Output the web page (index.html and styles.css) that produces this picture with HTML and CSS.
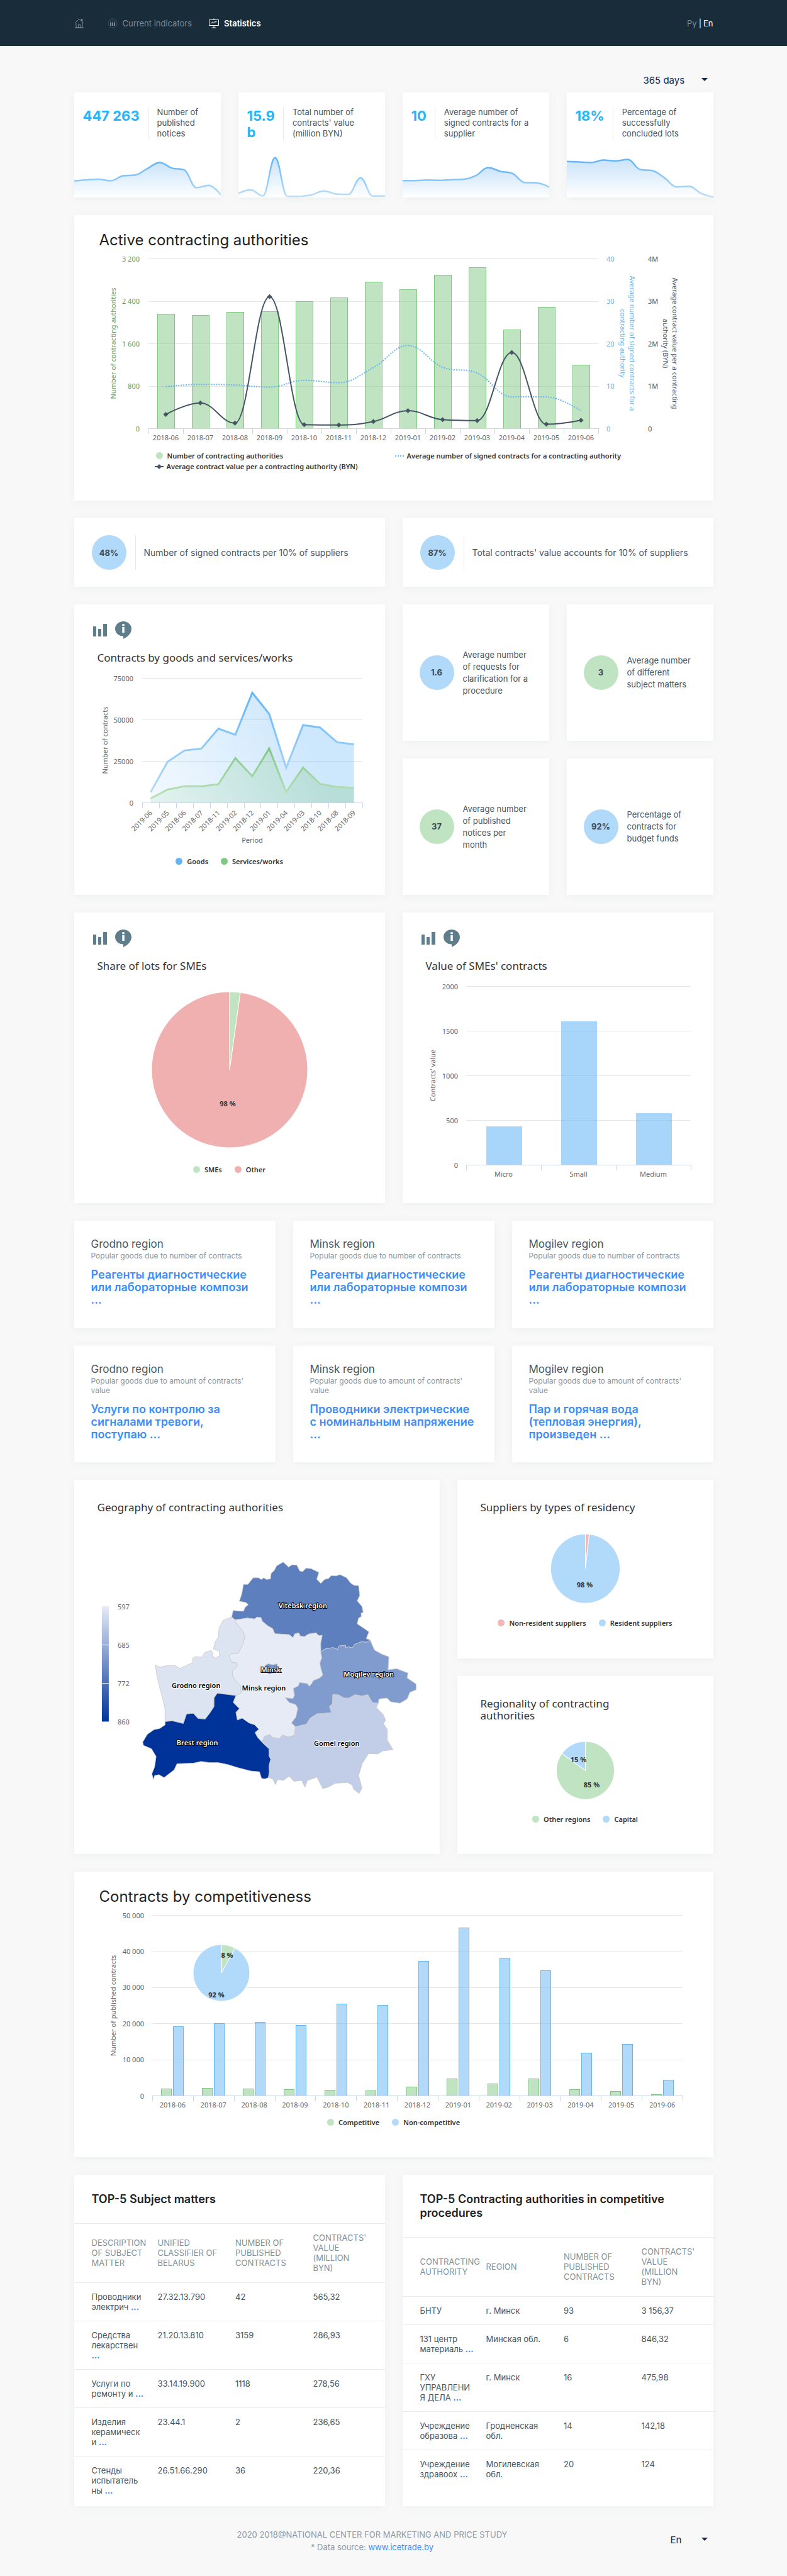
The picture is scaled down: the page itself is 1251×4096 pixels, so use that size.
FILE: index.html
```html
<!DOCTYPE html>
<html lang="en">
<head>
<meta charset="utf-8">
<meta name="viewport" content="width=device-width, initial-scale=1">
<title>Statistics</title>
<link rel="stylesheet" href="styles.css">
</head>
<body>
<svg class="sprite" aria-hidden="true">
  <symbol id="i-bars" viewBox="0 0 22 20"><path d="M0 4h5v16H0zM8 8h5v12H8zM16 0h6v20h-6z"/></symbol>
  <symbol id="i-info" viewBox="0 0 26 28"><path fill-rule="evenodd" d="M13 0c7.200 0 13 5.200 13 11.800 0 6.700-5.500 12.900-13 16.200v-4.400C5.800 23.600 0 18.400 0 11.800S5.800 0 13 0zM11.300 4.300h3.500v2.900h-3.500zM11.300 9h3.500v9h-3.500z"/></symbol>
</svg>

<header class="topbar">
  <div class="wrap topbar-in">
    <nav class="nav">
      <a href="#" aria-label="Home"><svg class="ico" viewBox="0 0 16 16"><path d="M1 8 8 1l7 7M3 7v8h10V7M6.500 15v-5h3v5M11.500 4V1.500h1.500v4M1 15h14"/></svg></a>
      <a href="#"><svg class="ico" viewBox="0 0 16 16"><circle cx="8" cy="8" r="7" opacity=".4"/><path d="M5 6.500V12M8 6.500V12M11 6.500V12" stroke-width="2"/><path d="M5 4v1.500M8 3.500V5M11 4v1.500" opacity=".7"/></svg>Current indicators</a>
      <a href="#" class="on"><svg class="ico" viewBox="0 0 16 16"><path d="M.500 2.500h15v9H.500zM8 .500v2M8 11.500v3.500M4.500 15.200h7M3.500 8.500l2.500-3 2 2.500 2-3 1 1.500 1.500-2"/></svg>Statistics</a>
    </nav>
    <div class="lang"><a href="#">Ру</a><span>|</span><a href="#" class="on">En</a></div>
  </div>
</header>

<main class="wrap">
  <div class="period">
    <label class="pick pick-days"><select aria-label="Period"><option>365 days</option></select></label>
  </div>

  <div class="stack">
    <section class="row four">
      <article class="card kpi"><div class="kpi-top"><strong>447 263</strong><p>Number of published notices</p></div><svg class="spark" id="spark-1" viewBox="0 0 233 67"></svg></article>
      <article class="card kpi"><div class="kpi-top"><strong>15.9<br>b</strong><p>Total number of contracts' value (million BYN)</p></div><svg class="spark" id="spark-2" viewBox="0 0 233 67"></svg></article>
      <article class="card kpi"><div class="kpi-top"><strong>10</strong><p>Average number of signed contracts for a supplier</p></div><svg class="spark" id="spark-3" viewBox="0 0 233 67"></svg></article>
      <article class="card kpi"><div class="kpi-top"><strong>18%</strong><p>Percentage of successfully concluded lots</p></div><svg class="spark" id="spark-4" viewBox="0 0 233 67"></svg></article>
    </section>

    <section class="card wide">
      <h2 class="big-title">Active contracting authorities</h2>
      <svg class="chart" id="authorities" viewBox="0 54 1016 314"></svg>
      <ul class="legend legend-grid">
        <li><i class="dot lgreen"></i>Number of contracting authorities</li>
        <li><svg class="key" viewBox="0 0 14 10"><path class="dotted" d="M0 5h14"/></svg>Average number of signed contracts for a contracting authority</li>
        <li><svg class="key" viewBox="0 0 14 10"><path class="dark-line" d="M0 5h14"/><path class="mark" d="M7 1l4 4-4 4-4-4z"/></svg>Average contract value per a contracting authority (BYN)</li>
      </ul>
    </section>

    <section class="row two">
      <article class="card share"><b class="disc blue">48%</b><p>Number of signed contracts per 10% of suppliers</p></article>
      <article class="card share"><b class="disc blue">87%</b><p>Total contracts' value accounts for 10% of suppliers</p></article>
    </section>

    <section class="row two">
      <article class="card half">
        <div class="tools"><button type="button" aria-label="Chart view"><svg class="t-bars"><use href="#i-bars"/></svg></button><button type="button" aria-label="Information"><svg class="t-info"><use href="#i-info"/></svg></button></div>
        <h3 class="title">Contracts by goods and services/works</h3>
        <svg class="chart" id="goods" viewBox="0 97 494 295"></svg>
        <ul class="legend"><li><i class="dot blue2"></i>Goods</li><li><i class="dot green2"></i>Services/works</li></ul>
      </article>
      <div class="facts">
        <article class="card fact"><b class="disc blue">1.6</b><p>Average number of requests for clarification for a procedure</p></article>
        <article class="card fact"><b class="disc green">3</b><p>Average number of different subject matters</p></article>
        <article class="card fact"><b class="disc green">37</b><p>Average number of published notices per month</p></article>
        <article class="card fact"><b class="disc blue">92%</b><p>Percentage of contracts for budget funds</p></article>
      </div>
    </section>

    <section class="row two">
      <article class="card half">
        <div class="tools"><button type="button" aria-label="Chart view"><svg class="t-bars"><use href="#i-bars"/></svg></button><button type="button" aria-label="Information"><svg class="t-info"><use href="#i-info"/></svg></button></div>
        <h3 class="title">Share of lots for SMEs</h3>
        <svg class="chart" id="sme-share" viewBox="0 97 494 295"></svg>
        <ul class="legend"><li><i class="dot lgreen"></i>SMEs</li><li><i class="dot red"></i>Other</li></ul>
      </article>
      <article class="card half">
        <div class="tools"><button type="button" aria-label="Chart view"><svg class="t-bars"><use href="#i-bars"/></svg></button><button type="button" aria-label="Information"><svg class="t-info"><use href="#i-info"/></svg></button></div>
        <h3 class="title">Value of SMEs' contracts</h3>
        <svg class="chart" id="sme-value" viewBox="0 97 494 335"></svg>
      </article>
    </section>

    <section class="row three">
      <article class="card region first"><h3>Grodno region</h3><p>Popular goods due to number of contracts</p><a href="#">Реагенты диагностические или лабораторные компози ...</a></article>
      <article class="card region first"><h3>Minsk region</h3><p>Popular goods due to number of contracts</p><a href="#">Реагенты диагностические или лабораторные компози ...</a></article>
      <article class="card region first"><h3>Mogilev region</h3><p>Popular goods due to number of contracts</p><a href="#">Реагенты диагностические или лабораторные компози ...</a></article>
    </section>

    <section class="row three">
      <article class="card region"><h3>Grodno region</h3><p>Popular goods due to amount of contracts' value</p><a href="#">Услуги по контролю за сигналами тревоги, поступаю ...</a></article>
      <article class="card region"><h3>Minsk region</h3><p>Popular goods due to amount of contracts' value</p><a href="#">Проводники электрические с номинальным напряжение ...</a></article>
      <article class="card region"><h3>Mogilev region</h3><p>Popular goods due to amount of contracts' value</p><a href="#">Пар и горячая вода (тепловая энергия), произведен ...</a></article>
    </section>

    <section class="row geo">
      <article class="card">
        <h3 class="title plain">Geography of contracting authorities</h3>
        <svg class="chart" id="map" viewBox="0 55 582 538">
          <defs><linearGradient id="scale" x1="0" y1="0" x2="0" y2="1"><stop offset="0" stop-color="#e6ebf5"/><stop offset="1" stop-color="#003399"/></linearGradient></defs>
          <rect x="44" y="201" width="11" height="184" fill="url(#scale)"/>
          <path d="M44 263h11M44 324h11" stroke="#fff"/>
          <g class="axis"><text x="69" y="202">597</text><text x="69" y="263">685</text><text x="69" y="324">772</text><text x="69" y="385">860</text></g>
          <g class="land" transform="translate(98 120) scale(.3053)">
            <path fill="#5e7fbe" d="M500,322 508,288 530,291 562,292 570,272 587,258 575,247 540,240 552,205 562,152 585,152 612,118 640,118 655,127 667,118 680,126 702,124 706,95 722,80 735,55 769,36 797,62 815,50 840,52 855,82 870,86 888,68 915,70 955,90 944,125 965,147 985,126 1005,122 1020,106 1045,108 1065,101 1100,118 1120,145 1140,158 1162,158 1168,210 1155,238 1180,268 1186,298 1175,302 1176,320 1162,328 1155,358 1195,385 1216,400 1202,435 1222,442 1205,454 1175,452 1140,466 1130,484 1110,478 1095,484 1095,470 1060,474 1052,492 1030,482 985,490 965,505 964,460 972,418 955,420 940,405 900,412 880,425 858,422 850,406 830,410 820,430 800,415 760,412 725,410 713,382 690,370 660,345 652,325 630,324 620,333 580,328 545,334 515,336Z"/>
            <path fill="#e6ebf5" d="M518,338 545,334 580,328 620,333 630,324 652,325 660,345 690,370 713,382 725,410 760,412 800,415 820,430 830,410 850,406 858,422 880,425 900,412 940,405 955,420 972,418 964,460 965,505 970,535 960,565 968,600 976,625 960,640 925,655 918,670 905,684 895,670 855,664 848,682 822,695 828,730 820,748 780,744 800,768 835,780 845,800 835,845 812,875 833,895 828,940 795,948 765,938 750,957 710,950 700,935 672,945 658,975 635,950 622,925 642,908 620,885 590,875 555,850 530,860 522,820 540,800 508,768 522,732 550,718 545,680 520,655 505,630 502,605 530,580 525,562 500,558 485,525 500,514 535,510 560,460 570,420 550,385 520,350Z"/>
            <path fill="#dde4f1" d="M500,322 518,338 520,350 550,385 570,420 560,460 535,510 500,514 485,525 500,558 525,562 530,580 502,605 505,630 520,655 545,680 550,718 522,732 425,720 408,745 408,790 385,825 362,855 325,852 300,825 265,828 248,878 190,864 153,868 152,800 148,780 130,710 112,640 102,574 125,584 165,576 205,575 230,591 280,568 298,560 295,540 310,530 345,532 360,508 392,497 402,510 398,525 415,536 437,525 435,500 405,490 415,450 432,425 434,380 455,340Z"/>
            <path fill="#003399" d="M522,732 508,768 540,800 522,820 530,860 555,850 590,875 620,885 642,908 622,925 635,950 658,975 695,1010 695,1045 704,1065 695,1100 697,1130 692,1160 675,1167 656,1165 645,1130 600,1126 530,1108 480,1092 430,1082 385,1082 340,1076 300,1085 215,1088 200,1120 148,1160 120,1145 98,1150 92,1172 84,1140 98,1105 106,1050 82,1010 40,992 36,975 60,935 95,910 125,904 153,885 153,868 190,864 248,878 265,828 300,825 325,852 362,855 385,825 408,790 408,745 425,720Z"/>
            <path fill="#809bcd" d="M965,505 985,490 1030,482 1052,492 1060,474 1095,470 1095,484 1110,478 1130,484 1140,466 1175,452 1205,454 1222,442 1245,495 1285,517 1320,530 1316,598 1360,592 1420,615 1415,640 1462,672 1462,702 1430,715 1415,750 1378,772 1330,765 1310,745 1268,750 1265,772 1235,770 1210,728 1180,735 1145,728 1110,746 1085,745 1060,730 1028,727 1026,775 1010,790 1022,822 945,828 910,850 890,882 833,895 812,875 835,845 845,800 835,780 800,768 780,744 820,748 828,730 822,695 848,682 855,664 895,670 905,684 918,670 925,655 960,640 976,625 968,600 960,565 970,535Z"/>
            <path fill="#c2cde8" d="M833,895 890,882 910,850 945,828 1022,822 1010,790 1026,775 1028,727 1060,730 1085,745 1110,746 1145,728 1180,735 1210,728 1235,770 1265,772 1255,795 1290,830 1303,860 1292,880 1312,908 1312,965 1342,1015 1290,1020 1262,1037 1215,1035 1182,1085 1162,1150 1180,1215 1165,1243 1135,1220 1130,1200 1105,1186 1040,1190 1000,1212 975,1217 945,1158 895,1175 883,1210 865,1175 825,1180 800,1153 770,1175 740,1170 728,1197 715,1168 692,1160 697,1130 695,1100 704,1065 695,1045 695,1010 658,975 672,945 700,935 710,950 750,957 765,938 795,948 828,940Z"/>
            <path fill="#6f90c8" d="M675,575 690,566 715,572 738,566 738,610 695,620 672,605Z"/>
          </g>
          <g class="place"><text class="inv" x="364" y="200">Vitebsk region</text><text class="inv" x="313" y="302">Minsk</text><text x="302" y="331">Minsk region</text><text x="194" y="327">Grodno region</text><text class="inv" x="196" y="418">Brest region</text><text x="418" y="419">Gomel region</text><text class="inv" x="469" y="309">Mogilev region</text></g>
        </svg>
      </article>
      <div class="col">
        <article class="card">
          <h3 class="title plain">Suppliers by types of residency</h3>
          <svg class="chart" id="residency" viewBox="0 55 406 156"></svg>
          <ul class="legend"><li><i class="dot pink"></i>Non-resident suppliers</li><li><i class="dot blue"></i>Resident suppliers</li></ul>
        </article>
        <article class="card">
          <h3 class="title plain">Regionality of contracting<br>authorities</h3>
          <svg class="chart" id="regionality" viewBox="0 74 406 137"></svg>
          <ul class="legend"><li><i class="dot lgreen"></i>Other regions</li><li><i class="dot blue"></i>Capital</li></ul>
        </article>
      </div>
    </section>

    <section class="card wide">
      <h2 class="big-title">Contracts by competitiveness</h2>
      <svg class="chart" id="competition" viewBox="0 54 1016 328"></svg>
      <ul class="legend"><li><i class="dot lgreen"></i>Competitive</li><li><i class="dot blue"></i>Non-competitive</li></ul>
    </section>

    <section class="row two tables">
      <article class="card top5">
        <h2>TOP-5 Subject matters</h2>
        <table>
          <thead><tr><th>Description of subject matter</th><th>Unified classifier of Belarus</th><th>Number of published contracts</th><th>Contracts' value (million BYN)</th></tr></thead>
          <tbody>
            <tr><td>Проводники электрич <a href="#">...</a></td><td>27.32.13.790</td><td>42</td><td>565,32</td></tr>
            <tr><td>Средства лекарствен<br><a href="#">...</a></td><td>21.20.13.810</td><td>3159</td><td>286,93</td></tr>
            <tr><td>Услуги по ремонту и <a href="#">...</a></td><td>33.14.19.900</td><td>1118</td><td>278,56</td></tr>
            <tr><td>Изделия керамическ<br>и <a href="#">...</a></td><td>23.44.1</td><td>2</td><td>236,65</td></tr>
            <tr><td>Стенды испытатель<br>ны <a href="#">...</a></td><td>26.51.66.290</td><td>36</td><td>220,36</td></tr>
          </tbody>
        </table>
      </article>
      <article class="card top5">
        <h2>TOP-5 Contracting authorities in competitive procedures</h2>
        <table>
          <thead><tr><th>Contracting authority</th><th>Region</th><th>Number of published contracts</th><th>Contracts' value (million BYN)</th></tr></thead>
          <tbody>
            <tr><td>БНТУ</td><td>г. Минск</td><td>93</td><td>3 156,37</td></tr>
            <tr><td>131 центр материаль <a href="#">...</a></td><td>Минская обл.</td><td>6</td><td>846,32</td></tr>
            <tr><td>ГХУ УПРАВЛЕНИ<br>Я ДЕЛА <a href="#">...</a></td><td>г. Минск</td><td>16</td><td>475,98</td></tr>
            <tr><td>Учреждение образова <a href="#">...</a></td><td>Гродненская обл.</td><td>14</td><td>142,18</td></tr>
            <tr><td>Учреждение здравоох <a href="#">...</a></td><td>Могилевская обл.</td><td>20</td><td>124</td></tr>
          </tbody>
        </table>
      </article>
    </section>
  </div>
</main>

<footer class="wrap foot">
  <p>2020 2018@NATIONAL CENTER FOR MARKETING AND PRICE STUDY<br>* Data source: <a href="#">www.icetrade.by</a></p>
  <label class="pick pick-lang"><select aria-label="Language"><option>En</option></select></label>
</footer>
<script src="charts.js"></script>
</body>
</html>
```
FILE: styles.css
```css
* { box-sizing: border-box; }
body { margin: 0; background: #f8f8f8; color: #455563; font: 13px/16px Inter, "Liberation Sans", sans-serif; }
h2, h3, p, ul { margin: 0; padding: 0; font-weight: 400; }
a { color: #3b8dff; text-decoration: none; }
.sprite { display: none; }
.wrap { width: 100%; max-width: 1016px; margin: 0 auto; }

/* top bar */
.topbar { background: #182c3a; }
.topbar-in { display: flex; justify-content: space-between; align-items: center; height: 73px; }
.nav { display: flex; align-items: center; gap: 27px; }
.nav a, .lang a { color: #7c8a97; }
.nav a { display: flex; align-items: center; gap: 8px; }
.nav a:first-child { margin-right: 10px; }
.nav a.on { color: #fff; font-weight: 600; }
.ico { width: 16px; height: 16px; fill: none; stroke: currentColor; }
.lang { display: flex; gap: 3px; color: #fff; }
.lang a.on { color: #fff; }

/* drop-downs */
.period { display: flex; justify-content: flex-end; height: 74px; padding-top: 43px; }
.pick { position: relative; display: block; height: 24px; }
.pick select { width: 100%; appearance: none; border: 0; padding: 0; background: none; color: #15264c; font: 15px/24px Inter, "Liberation Sans", sans-serif; }
.pick::after { content: ""; position: absolute; right: 9px; top: 8px; border: 5px solid transparent; border-top-color: #15264c; border-bottom: 0; pointer-events: none; }
.pick-days { width: 111px; }
.pick-lang { width: 68px; margin-top: 7px; }

/* layout */
.stack, .col { display: flex; flex-direction: column; gap: 28px; }
.row { display: grid; gap: 28px; }
.four { grid-template-columns: repeat(4, 1fr); }
.three { grid-template-columns: repeat(3, 1fr); }
.two { grid-template-columns: repeat(2, 1fr); }
.geo { grid-template-columns: 581fr 407fr; min-height: 595px; }
.col > .card { flex: 1; }
.card { min-width: 0; background: #fff; box-shadow: 0 2px 12px rgba(20, 90, 80, .05); }
.wide { min-height: 454px; }
.half { min-height: 462px; }

/* headline figures */
.kpi { display: flex; flex-direction: column; justify-content: space-between; min-height: 167px; }
.kpi-top { display: flex; padding: 23px 12px 0 14px; }
.kpi-top strong { flex: none; padding: 1px 13px 0 0; color: #25b5fb; font-size: 22px; line-height: 26px; }
.kpi-top p { padding-left: 14px; border-left: 1px solid #e6e9ec; line-height: 17px; }
.spark { display: block; width: 100%; overflow: hidden; }

/* figures in discs */
.disc { flex: none; display: flex; align-items: center; justify-content: center; width: 55px; height: 55px; border-radius: 50%; color: #3b4752; font-size: 13px; }
.blue { background: #b1d9fa; }
.green, .lgreen { background: #c0e4c1; }
.share { display: flex; align-items: center; gap: 14px; padding: 27px 28px; }
.share p { display: flex; align-items: center; height: 55px; padding-left: 13px; border-left: 1px solid #e6e9ec; font-size: 14px; }
.facts { display: grid; grid-template-columns: 1fr 1fr; gap: 28px; }
.fact { display: flex; align-items: center; gap: 14px; padding: 0 26px 0 27px; line-height: 19px; }

/* chart cards */
.chart { display: block; width: 100%; }
.big-title { padding: 26px 40px 0; color: #222; font-size: 24px; line-height: 28px; }
.title { padding: 0 37px 3px; color: #333; font: 17px/19px "Noto Sans", sans-serif; }
.title.plain { padding-top: 34px; padding-bottom: 2px; }
.tools { display: flex; align-items: center; gap: 13px; padding: 27px 30px 20px; }
.tools button { display: flex; border: 0; padding: 0; background: none; color: #607d8b; }
.tools svg { fill: #607d8b; }
.t-bars { width: 22px; height: 20px; }
.t-info { width: 26px; height: 28px; }
.legend { display: flex; justify-content: center; gap: 20px; padding-top: 8px; list-style: none; color: #333; font: 600 11px/17px "Noto Sans", sans-serif; }
.legend li { display: flex; align-items: center; gap: 7px; }
.legend-grid { display: grid; grid-template-columns: 382px 1fr; gap: 0; padding: 6px 0 0 128px; }
.legend-grid li { gap: 5px; }
.legend-grid .dot { margin: 0 2px; width: 11px; }
.dot { width: 11px; height: 11px; border-radius: 50%; }
.key { width: 14px; height: 10px; }
.blue2 { background: #64b5f6; }
.green2 { background: #81c784; }
.red { background: #f0b0b0; }
.pink { background: #f4b6b6; }

svg text { dominant-baseline: central; }
.axis { fill: #666; font: 11px "Noto Sans", sans-serif; }
.axis.g { fill: #5f9e62; }
.axis.b { fill: #64b5f6; }
.axis.d { fill: #455563; }
.r { text-anchor: end; }
.m { text-anchor: middle; }
.share-label { fill: #333; font: 700 11px "Noto Sans", sans-serif; text-anchor: middle; }
.grid { stroke: #e6e6e6; }
.base { stroke: #ccd6eb; fill: none; }
.dotted { fill: none; stroke: #64b5f6; stroke-width: 2; stroke-dasharray: 2 2; }
.dark-line { fill: none; stroke: #455563; stroke-width: 2; }
.mark { fill: #455563; }
.land path { stroke: #ccc; stroke-width: 3; stroke-linejoin: round; }
.place { fill: #000; stroke: #fff; stroke-width: 2px; paint-order: stroke; font: 600 11px "Noto Sans", sans-serif; text-anchor: middle; }
.place .inv { fill: #fff; stroke: #000; }

/* regions */
.region { padding: 26px 26px 0 27px; min-height: 185px; }
.region.first { min-height: 171px; }
.region h3 { font-size: 17px; line-height: 22px; color: #455563; }
.region p { margin-bottom: 13px; color: #8795a0; font-size: 12px; line-height: 15px; }
.region a { display: block; font-size: 18px; line-height: 20px; font-weight: 600; }

/* tables */
.tables { min-height: 527px; }
.top5 h2 { padding: 28px 28px 27px; color: #222; font-size: 18px; line-height: 22px; font-weight: 600; }
.top5 table { width: 100%; border-collapse: collapse; table-layout: fixed; }
.top5 th, .top5 td { padding: 14px 14px 14px 0; border-top: 1px solid #e8ebef; text-align: left; vertical-align: top; }
.top5 th { padding: 14px 6px 15px 0; vertical-align: middle; color: #7f929c; font-weight: 400; text-transform: uppercase; }
.top5 th:first-child, .top5 td:first-child { width: 133px; padding-left: 28px; }
.top5 th:last-child { width: 114px; padding-right: 24px; }
.top5 td a { font-weight: 700; }

.foot { display: flex; padding: 35px 0 40px; }
.foot p { flex: 1; text-align: center; color: #8b9aa4; line-height: 20px; }
```
FILE: charts.js
```js
const MONTHS = ['2018-06', '2018-07', '2018-08', '2018-09', '2018-10', '2018-11', '2018-12',
  '2019-01', '2019-02', '2019-03', '2019-04', '2019-05', '2019-06'];

const draw = (id, markup) => { document.getElementById(id).innerHTML = markup; };
const text = (x, y, s, cls) => `<text class="${cls}" x="${x}" y="${y}">${s}</text>`;
const turned = (x, y, angle, s, cls) => `<text class="${cls}" transform="translate(${x} ${y}) rotate(${angle})">${s}</text>`;

// smooth curve through the points, without overshoot at the peaks
function spline(p) {
  let d = `M${p[0][0]} ${p[0][1]}`, prev = p[0];
  for (let i = 1; i < p.length; i++) {
    const [x, y] = p[i];
    let left = [x, y], right = [x, y];
    if (i < p.length - 1) {
      const [lx, ly] = p[i - 1], [nx, ny] = p[i + 1];
      let lcx = (1.5 * x + lx) / 2.5, lcy = (1.5 * y + ly) / 2.5;
      let rcx = (1.5 * x + nx) / 2.5, rcy = (1.5 * y + ny) / 2.5;
      const c = (rcy - lcy) * (rcx - x) / (rcx - lcx) + y - rcy;
      lcy += c; rcy += c;
      if (lcy > ly && lcy > y) { lcy = Math.max(ly, y); rcy = 2 * y - lcy; }
      else if (lcy < ly && lcy < y) { lcy = Math.min(ly, y); rcy = 2 * y - lcy; }
      if (rcy > ny && rcy > y) { rcy = Math.max(ny, y); lcy = 2 * y - rcy; }
      else if (rcy < ny && rcy < y) { rcy = Math.min(ny, y); lcy = 2 * y - rcy; }
      left = [lcx, lcy]; right = [rcx, rcy];
    }
    d += `C${prev[0]} ${prev[1]} ${left[0]} ${left[1]} ${x} ${y}`;
    prev = right;
  }
  return d;
}

function frame(a, steps) {
  let s = '';
  for (let i = 1; i <= steps; i++) {
    const y = Math.round(a.bottom - (a.bottom - a.top) * i / steps) + 0.5;
    s += `<path class="grid" d="M${a.left} ${y}H${a.right}"/>`;
  }
  return s;
}
function baseline(a, count) {
  let d = `M${a.left} ${a.bottom + 0.5}H${a.right}`;
  for (let i = 0; i <= count; i++) d += `M${Math.round(a.left + (a.right - a.left) * i / count) + 0.5} ${a.bottom}v9`;
  return `<path class="base" d="${d}"/>`;
}
const centre = (a, count, i) => a.left + (a.right - a.left) * (i + 0.5) / count;
const level = (a, v, max) => a.bottom - (a.bottom - a.top) * v / max;
function ticks(a, x, labels, cls) {
  return labels.map((l, i) => text(x, level(a, i, labels.length - 1), l, cls)).join('');
}
function bar(x, y, w, bottom, fill, edge) {
  return `<rect x="${Math.round(x - w / 2) + 0.5}" y="${Math.round(y) + 0.5}" width="${w}" height="${Math.max(bottom - Math.round(y), 1)}" fill="${fill}" fill-opacity=".5" stroke="${edge}"/>`;
}
function pie(cx, cy, r, parts) {
  let at = 0, s = '';
  for (const [share, fill] of parts) {
    const p = t => [cx + r * Math.sin(t * 2 * Math.PI), cy - r * Math.cos(t * 2 * Math.PI)].join(' ');
    s += `<path d="M${cx} ${cy}L${p(at)}A${r} ${r} 0 ${share > 0.5 ? 1 : 0} 1 ${p(at + share)}Z" fill="${fill}" stroke="#fff"/>`;
    at += share;
  }
  return s;
}

// sparklines
[[86, 92, 95, 87, 113, 117, 151, 182, 153, 144, 51, 63, 14],
 [21, 39, 8, 207, 6, 6, 14, 34, 18, 16, 102, 7, 7],
 [88, 88, 91, 89, 93, 95, 114, 156, 136, 125, 78, 76, 54],
 [188, 185, 182, 195, 191, 198, 146, 140, 102, 55, 58, 21, 2]].forEach((data, n) => {
  const d = spline(data.map((v, i) => [i * 233 / 12, 67 - v * 0.305]));
  const top = 67 - Math.max(...data) * 0.305;
  draw(`spark-${n + 1}`, `<defs>
    <linearGradient id="sl${n}" gradientUnits="userSpaceOnUse" x1="0" y1="${top}" x2="0" y2="67"><stop offset="0" stop-color="#64b5f6"/><stop offset="1" stop-color="#bbdefb"/></linearGradient>
    <linearGradient id="sf${n}" gradientUnits="userSpaceOnUse" x1="0" y1="${top}" x2="0" y2="67"><stop offset="0" stop-color="#cae3fa"/><stop offset="1" stop-color="#fff"/></linearGradient></defs>
    <path d="${d}V67H0Z" fill="url(#sf${n})"/><path d="${d}" fill="none" stroke="url(#sl${n})" stroke-width="2.500"/>`);
});

// active contracting authorities
{
  const a = { left: 118, right: 833, top: 69, bottom: 339 };
  const bars = [2159, 2137, 2191, 2202, 2397, 2462, 2766, 2625, 2896, 3037, 1866, 2289, 1193];
  const signed = [9.8, 10.35, 10.2, 9.7, 11.3, 10.75, 14.3, 19.5, 14.4, 13, 7.4, 7.4, 4.1];
  const value = [0.325, 0.597, 0.122, 3.1, 0.086, 0.077, 0.158, 0.416, 0.203, 0.181, 1.785, 0.095, 0.19];
  const pts = value.map((v, i) => [centre(a, 13, i), level(a, v, 4)]);
  draw('authorities', frame(a, 4)
    + bars.map((v, i) => bar(centre(a, 13, i), level(a, v, 3200), 27, a.bottom, '#81c784', '#81c784')).join('')
    + baseline(a, 13)
    + `<path class="dotted" d="${spline(signed.map((v, i) => [centre(a, 13, i), level(a, v, 40)]))}"/>`
    + `<path class="dark-line" d="${spline(pts)}"/>`
    + pts.map(([x, y]) => `<path class="mark" d="M${x} ${y - 4}l4 4-4 4-4-4z"/>`).join('')
    + MONTHS.map((m, i) => text(centre(a, 13, i), 353, m, 'axis m')).join('')
    + ticks(a, 104, ['0', '800', '1 600', '2 400', '3 200'], 'axis g r')
    + ticks(a, 846, ['0', '10', '20', '30', '40'], 'axis b')
    + ticks(a, 912, ['0', '1M', '2M', '3M', '4M'], 'axis d')
    + turned(61, 204, -90, 'Number of contracting authorities', 'axis g m')
    + turned(887, 204, 90, 'Average number of signed contracts for a', 'axis b m')
    + turned(872, 204, 90, 'contracting authority', 'axis b m')
    + turned(955, 204, 90, 'Average contract value per a contracting', 'axis d m')
    + turned(940, 204, 90, 'authority (BYN)', 'axis d m'));
}

// goods and services
{
  const a = { left: 108, right: 458, top: 117, bottom: 315 };
  const months = ['2019-06', '2019-05', '2018-06', '2018-07', '2018-11', '2019-02', '2018-12', '2019-01', '2019-04', '2019-03', '2018-10', '2018-08', '2018-09'];
  const goods = [6200, 24500, 31300, 32500, 44500, 40800, 66100, 53300, 20900, 46600, 45200, 36300, 35000];
  const works = [2400, 7750, 9800, 9800, 11000, 26700, 15800, 32500, 6350, 21000, 11200, 9400, 8800];
  const line = data => 'M' + data.map((v, i) => `${centre(a, 13, i)} ${level(a, v, 75000)}`).join('L');
  const close = `V${a.bottom}H${centre(a, 13, 0)}Z`;
  const grad = (id, from, to, o1, o2) => `<linearGradient id="${id}" gradientUnits="userSpaceOnUse" x1="121" y1="315" x2="445" y2="160"><stop offset="0" stop-color="${from}" stop-opacity="${o1}"/><stop offset=".75" stop-color="${to}" stop-opacity="${o2}"/></linearGradient>`;
  draw('goods', '<defs>' + grad('gf', '#64b5f6', '#64b5f6', 0.08, 0.32) + grad('wf', '#81c784', '#81c784', 0.12, 0.3)
    + '<linearGradient id="gl" gradientUnits="userSpaceOnUse" x1="0" y1="315" x2="0" y2="140"><stop offset="0" stop-color="#bbdefb"/><stop offset="1" stop-color="#64b5f6"/></linearGradient>'
    + '<linearGradient id="wl" gradientUnits="userSpaceOnUse" x1="0" y1="315" x2="0" y2="229"><stop offset="0" stop-color="#c0e4c1"/><stop offset="1" stop-color="#81c784"/></linearGradient></defs>'
    + frame(a, 3)
    + `<path d="${line(goods)}${close}" fill="url(#gf)"/><path d="${line(goods)}" fill="none" stroke="url(#gl)" stroke-width="3"/>`
    + `<path d="${line(works)}${close}" fill="url(#wf)"/><path d="${line(works)}" fill="none" stroke="url(#wl)" stroke-width="3"/>`
    + baseline(a, 13)
    + months.map((m, i) => turned(centre(a, 13, i), 329, -45, m, 'axis r')).join('')
    + ticks(a, 94, ['0', '25000', '50000', '75000'], 'axis r')
    + turned(48, 216, -90, 'Number of contracts', 'axis m')
    + text(283, 374, 'Period', 'axis m'));
}

draw('sme-share', pie(247, 250, 124, [[0.022, '#c0e4c1'], [0.978, '#f0b0b0']]) + text(244, 303, '98 %', 'share-label'));

// value of contracts
{
  const a = { left: 101, right: 458, top: 117, bottom: 401 };
  const data = [['Micro', 431], ['Small', 1608], ['Medium', 579]];
  draw('sme-value', frame(a, 4)
    + data.map(([, v], i) => `<rect x="${Math.round(centre(a, 3, i) - 28)}" y="${Math.round(level(a, v, 2000))}" width="57" height="${a.bottom - Math.round(level(a, v, 2000))}" fill="#64b5f6" fill-opacity=".56"/>`).join('')
    + baseline(a, 3)
    + data.map(([l], i) => text(centre(a, 3, i), 415, l, 'axis m')).join('')
    + ticks(a, 88, ['0', '500', '1000', '1500', '2000'], 'axis r')
    + turned(47, 259, -90, "Contracts' value", 'axis m'));
}

draw('residency', pie(203, 141, 55, [[0.018, '#f4b6b6'], [0.982, '#b1d9fa']]) + text(202, 166, '98 %', 'share-label'));
draw('regionality', pie(203, 150, 46, [[0.85, '#c0e4c1'], [0.15, '#b1d9fa']]) + text(192, 132, '15 %', 'share-label') + text(213, 172, '85 %', 'share-label'));

// competitiveness
{
  const a = { left: 124, right: 967, top: 69, bottom: 356 };
  const comp = [1890, 2050, 1890, 1730, 1570, 1460, 2380, 4640, 3350, 4640, 1730, 1300, 320];
  const non = [19170, 19980, 20470, 19490, 25380, 25060, 37210, 46500, 38180, 34670, 11830, 14360, 4320];
  draw('competition', frame(a, 5)
    + comp.map((v, i) => bar(centre(a, 13, i) - 10, level(a, v, 50000), 16, a.bottom, '#81c784', '#81c784')
      + bar(centre(a, 13, i) + 9, level(a, non[i], 50000), 16, a.bottom, '#64b5f6', '#64b5f6')).join('')
    + baseline(a, 13)
    + MONTHS.map((m, i) => text(centre(a, 13, i), 370, m, 'axis m')).join('')
    + ticks(a, 111, ['0', '10 000', '20 000', '30 000', '40 000', '50 000'], 'axis r')
    + turned(61, 213, -90, 'Number of published contracts', 'axis m')
    + pie(234, 161, 45, [[0.08, '#c0e4c1'], [0.92, '#b1d9fa']])
    + text(243, 132, '8 %', 'share-label') + text(226, 195, '92 %', 'share-label'));
}
```
